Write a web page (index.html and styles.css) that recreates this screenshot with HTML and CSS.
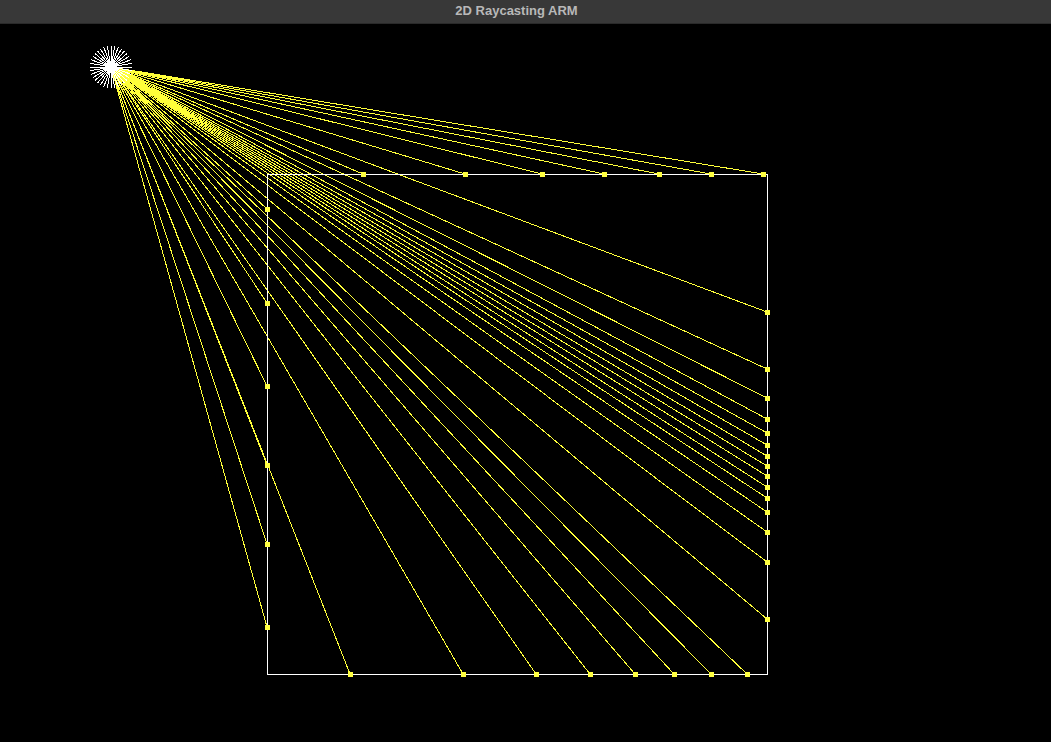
FILE: index.html
```html
<!DOCTYPE html>
<html>
<head>
<meta charset="utf-8">
<title>2D Raycasting ARM</title>
<link rel="stylesheet" href="styles.css">
</head>
<body>
<div class="window">
  <header class="titlebar">2D Raycasting ARM</header>
  <main class="canvas">
    <svg class="scene" width="1051" height="718" viewBox="0 0 1051 718">
      <g class="rays">
        <line x1="111" y1="43" x2="363" y2="150"/>
        <line x1="111" y1="43" x2="465" y2="150"/>
        <line x1="111" y1="43" x2="542" y2="150"/>
        <line x1="111" y1="43" x2="604" y2="150"/>
        <line x1="111" y1="43" x2="659" y2="150"/>
        <line x1="111" y1="43" x2="711" y2="150"/>
        <line x1="111" y1="43" x2="763" y2="150"/>
        <line x1="111" y1="43" x2="267" y2="185"/>
        <line x1="111" y1="43" x2="267" y2="279"/>
        <line x1="111" y1="43" x2="267" y2="362"/>
        <line x1="111" y1="43" x2="267" y2="441"/>
        <line x1="111" y1="43" x2="267" y2="520"/>
        <line x1="111" y1="43" x2="267" y2="603"/>
        <line x1="111" y1="43" x2="767" y2="288"/>
        <line x1="111" y1="43" x2="767" y2="345"/>
        <line x1="111" y1="43" x2="767" y2="374"/>
        <line x1="111" y1="43" x2="767" y2="395"/>
        <line x1="111" y1="43" x2="767" y2="409"/>
        <line x1="111" y1="43" x2="767" y2="421"/>
        <line x1="111" y1="43" x2="767" y2="432"/>
        <line x1="111" y1="43" x2="767" y2="442"/>
        <line x1="111" y1="43" x2="767" y2="452"/>
        <line x1="111" y1="43" x2="767" y2="463"/>
        <line x1="111" y1="43" x2="767" y2="474"/>
        <line x1="111" y1="43" x2="767" y2="488"/>
        <line x1="111" y1="43" x2="767" y2="508"/>
        <line x1="111" y1="43" x2="767" y2="538"/>
        <line x1="111" y1="43" x2="767" y2="595"/>
        <line x1="111" y1="43" x2="350" y2="650"/>
        <line x1="111" y1="43" x2="463" y2="650"/>
        <line x1="111" y1="43" x2="536" y2="650"/>
        <line x1="111" y1="43" x2="590" y2="650"/>
        <line x1="111" y1="43" x2="635" y2="650"/>
        <line x1="111" y1="43" x2="674" y2="650"/>
        <line x1="111" y1="43" x2="711" y2="650"/>
        <line x1="111" y1="43" x2="747" y2="650"/>
      </g>
      <rect class="wall" x="267.5" y="150.5" width="500" height="500"/>
      <g class="hits">
        <rect x="361" y="148" width="5" height="5"/>
        <rect x="463" y="148" width="5" height="5"/>
        <rect x="540" y="148" width="5" height="5"/>
        <rect x="602" y="148" width="5" height="5"/>
        <rect x="657" y="148" width="5" height="5"/>
        <rect x="709" y="148" width="5" height="5"/>
        <rect x="761" y="148" width="5" height="5"/>
        <rect x="265" y="183" width="5" height="5"/>
        <rect x="265" y="277" width="5" height="5"/>
        <rect x="265" y="360" width="5" height="5"/>
        <rect x="265" y="439" width="5" height="5"/>
        <rect x="265" y="518" width="5" height="5"/>
        <rect x="265" y="601" width="5" height="5"/>
        <rect x="765" y="286" width="5" height="5"/>
        <rect x="765" y="343" width="5" height="5"/>
        <rect x="765" y="372" width="5" height="5"/>
        <rect x="765" y="393" width="5" height="5"/>
        <rect x="765" y="407" width="5" height="5"/>
        <rect x="765" y="419" width="5" height="5"/>
        <rect x="765" y="430" width="5" height="5"/>
        <rect x="765" y="440" width="5" height="5"/>
        <rect x="765" y="450" width="5" height="5"/>
        <rect x="765" y="461" width="5" height="5"/>
        <rect x="765" y="472" width="5" height="5"/>
        <rect x="765" y="486" width="5" height="5"/>
        <rect x="765" y="506" width="5" height="5"/>
        <rect x="765" y="536" width="5" height="5"/>
        <rect x="765" y="593" width="5" height="5"/>
        <rect x="348" y="648" width="5" height="5"/>
        <rect x="461" y="648" width="5" height="5"/>
        <rect x="534" y="648" width="5" height="5"/>
        <rect x="588" y="648" width="5" height="5"/>
        <rect x="633" y="648" width="5" height="5"/>
        <rect x="672" y="648" width="5" height="5"/>
        <rect x="709" y="648" width="5" height="5"/>
        <rect x="745" y="648" width="5" height="5"/>
      </g>
      <g class="light" transform="translate(111 43)">
        <line x2="21" transform="rotate(0)"/>
        <line x2="21" transform="rotate(10)"/>
        <line x2="21" transform="rotate(20)"/>
        <line x2="21" transform="rotate(30)"/>
        <line x2="21" transform="rotate(40)"/>
        <line x2="21" transform="rotate(50)"/>
        <line x2="21" transform="rotate(60)"/>
        <line x2="21" transform="rotate(70)"/>
        <line x2="21" transform="rotate(80)"/>
        <line x2="21" transform="rotate(90)"/>
        <line x2="21" transform="rotate(100)"/>
        <line x2="21" transform="rotate(110)"/>
        <line x2="21" transform="rotate(120)"/>
        <line x2="21" transform="rotate(130)"/>
        <line x2="21" transform="rotate(140)"/>
        <line x2="21" transform="rotate(150)"/>
        <line x2="21" transform="rotate(160)"/>
        <line x2="21" transform="rotate(170)"/>
        <line x2="21" transform="rotate(180)"/>
        <line x2="21" transform="rotate(190)"/>
        <line x2="21" transform="rotate(200)"/>
        <line x2="21" transform="rotate(210)"/>
        <line x2="21" transform="rotate(220)"/>
        <line x2="21" transform="rotate(230)"/>
        <line x2="21" transform="rotate(240)"/>
        <line x2="21" transform="rotate(250)"/>
        <line x2="21" transform="rotate(260)"/>
        <line x2="21" transform="rotate(270)"/>
        <line x2="21" transform="rotate(280)"/>
        <line x2="21" transform="rotate(290)"/>
        <line x2="21" transform="rotate(300)"/>
        <line x2="21" transform="rotate(310)"/>
        <line x2="21" transform="rotate(320)"/>
        <line x2="21" transform="rotate(330)"/>
        <line x2="21" transform="rotate(340)"/>
        <line x2="21" transform="rotate(350)"/>
      </g>
    </svg>
  </main>
</div>
</body>
</html>
```
FILE: styles.css
```css
html, body {
  margin: 0;
  padding: 0;
  background: #000;
  overflow: hidden;
}

.window {
  width: 1051px;
  height: 742px;
  display: flex;
  flex-direction: column;
  background: #000;
}

.titlebar {
  height: 24px;
  flex: 0 0 24px;
  background: #383838;
  color: #b8b8b8;
  font-family: "Liberation Sans", Arial, sans-serif;
  font-weight: bold;
  font-size: 13px;
  line-height: 22px;
  text-align: center;
  padding-right: 18px;
  box-sizing: border-box;
  border-bottom: 1px solid #2a2a2a;
}

.canvas {
  flex: 1 1 auto;
  background: #000;
}

.scene {
  display: block;
}

.rays line {
  stroke: #ffff3a;
  stroke-width: 1;
  shape-rendering: crispEdges;
}

.wall {
  fill: none;
  stroke: #ffffff;
  stroke-width: 1;
  shape-rendering: crispEdges;
}

.hits rect {
  fill: #ffff40;
  shape-rendering: crispEdges;
}

.light line {
  stroke: #ffffff;
  stroke-width: 1;
  shape-rendering: crispEdges;
}
```
